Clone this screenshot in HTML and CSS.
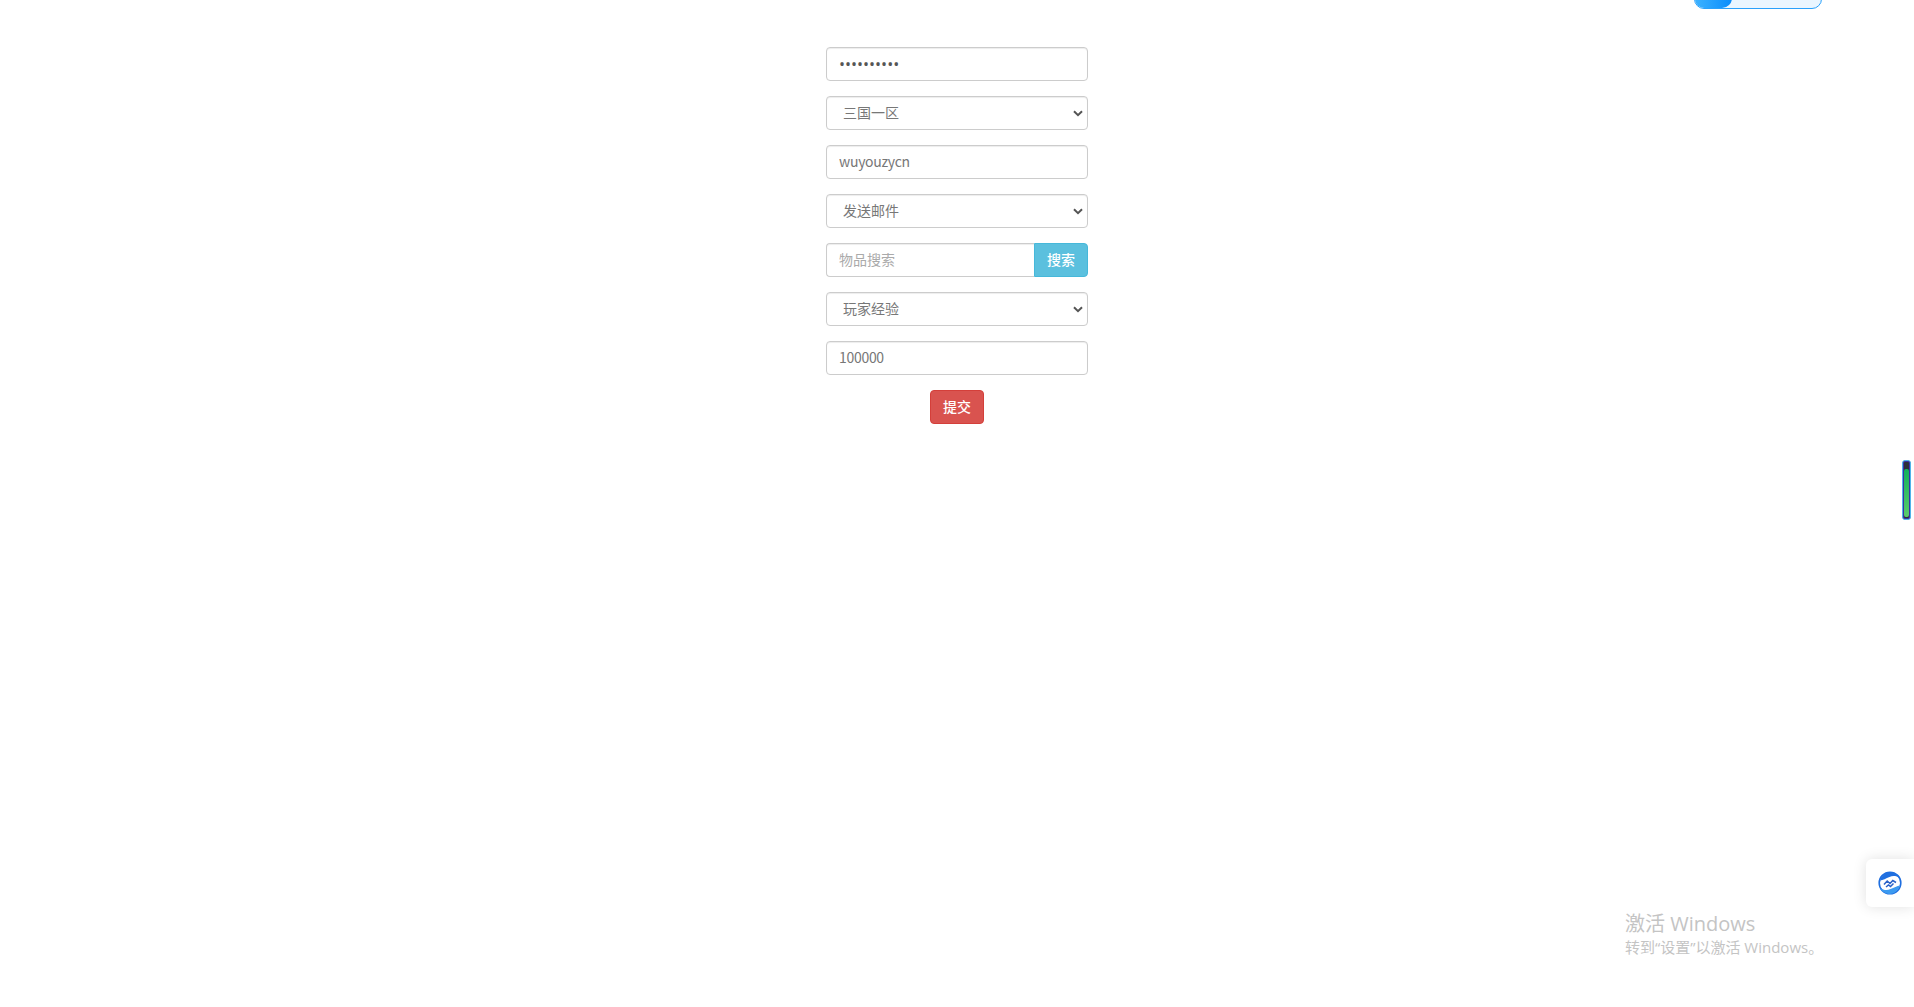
FILE: index.html
```html
<!DOCTYPE html>
<html lang="zh-CN">
<head>
    <meta charset="UTF-8">
    <title>GM</title>
    <link rel="stylesheet" href="styles.css">
</head>
<body>
<form class="panel">
    <input class="form-control password" type="password" value="1234567890">
    <select class="form-control picker">
        <option>三国一区</option>
    </select>
    <input class="form-control latin" type="text" value="wuyouzycn">
    <select class="form-control picker">
        <option>发送邮件</option>
    </select>
    <div class="input-group">
        <input class="form-control" type="text" placeholder="物品搜索">
        <button class="btn btn-info" type="button">搜索</button>
    </div>
    <select class="form-control picker">
        <option>玩家经验</option>
    </select>
    <input class="form-control latin" type="text" value="100000">
    <div class="center">
        <button class="btn btn-danger" type="button">提交</button>
    </div>
</form>

<div class="toggle"><span class="toggle-knob"></span></div>

<div class="meter"><span class="meter-fill"></span></div>

<div class="float-tab">
    <svg width="24" height="24" viewBox="0 0 24 24">
        <circle cx="12" cy="12" r="10.8" fill="#fff" stroke="#1f6fe0" stroke-width="1.6"/>
        <path d="M2 9.500C4 4 8 1 12 1c4.500 0 8 2.500 10 6-4-2.500-7.500-2.500-10.500-1C8 7.500 5 9 2 9.500z" fill="#1f6fe0"/>
        <path d="M22 14.500C20 20 16 23 12 23c-4.500 0-8-2.500-10-6 4 2.500 7.500 2.500 10.500 1 3.500-1.500 6.500-3 9.500-3.500z" fill="#3b9af0"/>
        <path d="M6 13.500l3.200-3.500 2.800 2.500 2.800-3 3.200 2M8 16l2.500-2 2 1.500 3-3" fill="none" stroke="#2a62c8" stroke-width="1.500"/>
    </svg>
</div>

<div class="activate">
    <div class="activate-title">激活 Windows</div>
    <div class="activate-sub">转到“设置”以激活 Windows。</div>
</div>
</body>
</html>
```

FILE: styles.css
```css
html, body {
    margin: 0;
    height: 100%;
    background: #fff;
    overflow: hidden;
}

body {
    font-family: "Noto Sans CJK SC", sans-serif;
    font-size: 14px;
    color: #555;
}

.panel {
    width: 262px;
    margin: 0 auto;
    padding-top: 47px;
    display: flex;
    flex-direction: column;
    gap: 15px;
}

.form-control {
    display: block;
    box-sizing: border-box;
    width: 100%;
    height: 34px;
    padding: 4px 12px 6px;
    font-family: inherit;
    font-size: 14px;
    color: #777;
    background: #fff;
    border: 1px solid #ccc;
    border-radius: 4px;
    box-shadow: inset 0 1px 1px rgba(0, 0, 0, 0.075);
}

.form-control::placeholder {
    color: #aaa;
}

.password {
    padding-top: 6px;
    font-family: "Open Sans", sans-serif;
    font-size: 16px;
    color: #555;
}

.latin {
    letter-spacing: -0.3px;
}

.picker {
    appearance: none;
    padding-left: 16px;
    background: #fff url("data:image/svg+xml,%3Csvg xmlns='http://www.w3.org/2000/svg' width='10' height='7'%3E%3Cpath d='M1 1.200l4 4 4-4' fill='none' stroke='%23555' stroke-width='2'/%3E%3C/svg%3E") no-repeat right 4px center;
}

.input-group {
    display: flex;
}

.input-group .form-control {
    flex: 1;
    min-width: 0;
    border-right: 0;
    border-radius: 4px 0 0 4px;
}

.btn {
    box-sizing: border-box;
    width: 54px;
    height: 34px;
    padding: 0 0 2px;
    font-family: inherit;
    font-size: 14px;
    font-weight: 500;
    color: #fff;
    border: 1px solid transparent;
    border-radius: 4px;
}

.btn-info {
    background: #5bc0de;
    border-color: #46b8da;
    border-radius: 0 4px 4px 0;
}

.btn-danger {
    background: #d9534f;
    border-color: #d43f3a;
}

.center {
    display: flex;
    justify-content: center;
}

.toggle {
    position: absolute;
    top: -25px;
    left: 1694px;
    box-sizing: border-box;
    width: 128px;
    height: 34px;
    background: #eaf6ff;
    border: 1px solid #2aa1fb;
    border-radius: 10px;
    overflow: hidden;
}

.toggle-knob {
    display: block;
    width: 37px;
    height: 100%;
    background: linear-gradient(90deg, #3db2ff, #0a8dfb);
    border-radius: 0 10px 10px 0;
}

.meter {
    position: absolute;
    top: 460px;
    left: 1902px;
    box-sizing: border-box;
    width: 9px;
    height: 60px;
    padding-top: 8px;
    background: #2c2f3a;
    border: 1px solid #4fb4ea;
    border-radius: 3px;
    box-shadow: inset 0 0 0 1px #3b2fa8;
}

.meter-fill {
    display: block;
    height: 48px;
    margin: 0 1px;
    background: linear-gradient(180deg, #11b05c, #5acb6c);
    border-radius: 2px;
}

.float-tab {
    position: absolute;
    top: 859px;
    left: 1866px;
    display: flex;
    align-items: center;
    box-sizing: border-box;
    width: 48px;
    height: 48px;
    padding-left: 12px;
    background: #fff;
    border-radius: 6px 0 0 6px;
    box-shadow: 0 0 14px rgba(0, 0, 0, 0.12);
}

.activate {
    position: absolute;
    top: 911px;
    left: 1625px;
    color: #c4c4c4;
    font-family: "Open Sans", "Noto Sans CJK SC", sans-serif;
    white-space: nowrap;
}

.activate-title {
    font-size: 20px;
    line-height: 26px;
}

.activate-sub {
    font-size: 15px;
    line-height: 20px;
}
```
